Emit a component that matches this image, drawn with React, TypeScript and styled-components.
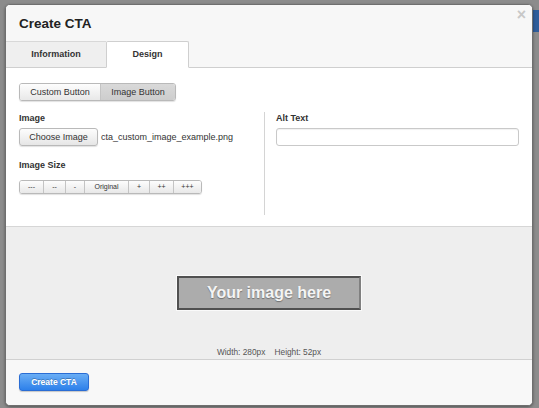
import React from "react";
import styled, { createGlobalStyle, css } from "styled-components";

const GlobalStyle = createGlobalStyle`
  html, body {
    margin: 0;
    padding: 0;
    background: #8c8c8c;
    font-family: "Liberation Sans", Arial, sans-serif;
  }
`;

const Backdrop = styled.div`
  width: 539px;
  height: 408px;
  padding: 4px 6px 4px 5px;
  box-sizing: border-box;
  background: #8c8c8c;
  position: relative;
  overflow: hidden;
`;

const PageHint = styled.div`
  position: absolute;
  right: 0;
  top: 10px;
  width: 8px;
  height: 22px;
  background: #2f5d9a;
`;

const Modal = styled.div`
  position: relative;
  height: 100%;
  display: flex;
  flex-direction: column;
  background: #f8f8f8;
  border: 1px solid #6f6f6f;
  border-radius: 5px;
  overflow: hidden;
  box-shadow: 0 1px 3px rgba(0, 0, 0, 0.4);
`;

const Header = styled.div`
  background: #f7f7f7;
  border-bottom: 1px solid #cfcfcf;
  display: flex;
  flex-direction: column;
`;

const Title = styled.h3`
  margin: 0;
  padding: 10px 13px 9px;
  font-size: 13.5px;
  font-weight: bold;
  color: #222;
  height: 17px;
  line-height: 17px;
`;

const Close = styled.span`
  position: absolute;
  right: 6px;
  top: 2px;
  font-size: 16px;
  font-weight: bold;
  color: #c8c8c8;
  line-height: 16px;
`;

const Tabs = styled.div`
  display: flex;
  margin-bottom: -1px;
`;

const Tab = styled.div<{ $active?: boolean; $w: number }>`
  width: ${(p) => p.$w}px;
  height: 25px;
  line-height: 25px;
  font-size: 9px;
  font-weight: bold;
  text-align: center;
  color: #333;
  ${(p) =>
    p.$active
      ? css`
          background: #fff;
          border: 1px solid #cfcfcf;
          border-bottom: 1px solid #fff;
          border-radius: 2px 2px 0 0;
        `
      : css`
          background: #efefef;
          border-top: 1px solid #d8d8d8;
          border-bottom: 1px solid #cfcfcf;
        `}
`;

const Body = styled.div`
  background: #fff;
  padding: 13px 13px 11px;
`;

const Segmented = styled.div`
  display: inline-flex;
  border: 1px solid #b9b9b9;
  border-radius: 3px;
  overflow: hidden;
  box-shadow: 0 1px 1px rgba(0, 0, 0, 0.12);
`;

const SegButton = styled.div<{ $active?: boolean; $w: number; $h: number; $fs: number }>`
  width: ${(p) => p.$w}px;
  height: ${(p) => p.$h}px;
  line-height: ${(p) => p.$h}px;
  font-size: ${(p) => p.$fs}px;
  text-align: center;
  color: #333;
  background: ${(p) =>
    p.$active
      ? "linear-gradient(#d9d9d9, #cdcdcd)"
      : "linear-gradient(#fdfdfd, #e8e8e8)"};
  & + & {
    border-left: 1px solid #c4c4c4;
  }
`;

const Columns = styled.div`
  display: flex;
  margin-top: 11px;
`;

const LeftCol = styled.div`
  width: 245px;
  border-right: 1px solid #d4d4d4;
  padding-bottom: 21px;
`;

const RightCol = styled.div`
  flex: 1;
  padding-left: 11px;
`;

const Label = styled.div<{ $top?: number }>`
  font-size: 9px;
  font-weight: bold;
  color: #333;
  margin-top: ${(p) => p.$top ?? 0}px;
  margin-bottom: 4px;
  line-height: 12px;
`;

const FileRow = styled.div`
  display: flex;
  align-items: center;
  gap: 3px;
`;

const Button = styled.div`
  width: 77px;
  height: 16px;
  line-height: 16px;
  font-size: 9px;
  text-align: center;
  color: #333;
  border: 1px solid #b9b9b9;
  border-radius: 3px;
  background: linear-gradient(#fdfdfd, #e6e6e6);
  box-shadow: 0 1px 1px rgba(0, 0, 0, 0.12);
`;

const FileName = styled.span`
  font-size: 9px;
  color: #333;
`;

const TextInput = styled.div`
  height: 16px;
  border: 1px solid #c9c9c9;
  border-radius: 3px;
  background: #fff;
  box-shadow: inset 0 1px 1px rgba(0, 0, 0, 0.06);
`;

const Preview = styled.div`
  flex: 1;
  background: #eeeeee;
  border-top: 1px solid #d6d6d6;
  display: flex;
  flex-direction: column;
  align-items: center;
  padding-top: 49px;
`;

const Placeholder = styled.div`
  width: 180px;
  height: 30px;
  background: #acacac;
  border: 2px solid #505050;
  border-right-color: #808080;
  outline: 1px solid #fafafa;
  display: flex;
  align-items: center;
  justify-content: center;
  font-size: 16px;
  font-weight: bold;
  color: #f4f4f4;
  text-shadow: 0 1px 1px rgba(0, 0, 0, 0.35);
`;

const Dimensions = styled.div`
  margin-top: auto;
  margin-bottom: 2px;
  font-size: 8.3px;
  color: #555;
  white-space: pre;
`;

const Footer = styled.div`
  height: 46px;
  background: #f8f8f8;
  border-top: 1px solid #d0d0d0;
  padding: 13px 13px 0;
  box-sizing: border-box;
`;

const PrimaryButton = styled.div`
  width: 68px;
  height: 16px;
  line-height: 16px;
  font-size: 8.5px;
  font-weight: bold;
  text-align: center;
  color: #fff;
  border: 1px solid #2a6dd4;
  border-radius: 3px;
  background: linear-gradient(#6aaef5, #2d80ea);
  text-shadow: 0 -1px 0 rgba(0, 0, 0, 0.25);
  box-shadow: 0 1px 1px rgba(0, 0, 0, 0.2);
`;

const sizes = [
  { t: "---", w: 23 },
  { t: "--", w: 21 },
  { t: "-", w: 18 },
  { t: "Original", w: 43 },
  { t: "+", w: 20 },
  { t: "++", w: 23 },
  { t: "+++", w: 27 },
];

export default function App() {
  return (
    <>
      <GlobalStyle />
      <Backdrop>
        <PageHint />
        <Modal>
          <Close>×</Close>
          <Header>
            <Title>Create CTA</Title>
            <Tabs>
              <Tab $w={100}>Information</Tab>
              <Tab $active $w={81}>
                Design
              </Tab>
            </Tabs>
          </Header>
          <Body>
            <Segmented>
              <SegButton $w={80} $h={16} $fs={9}>
                Custom Button
              </SegButton>
              <SegButton $active $w={74} $h={16} $fs={9}>
                Image Button
              </SegButton>
            </Segmented>
            <Columns>
              <LeftCol>
                <Label $top={0}>Image</Label>
                <FileRow>
                  <Button>Choose Image</Button>
                  <FileName>cta_custom_image_example.png</FileName>
                </FileRow>
                <Label $top={13}>Image Size</Label>
                <Segmented>
                  {sizes.map((s, i) => (
                    <SegButton key={i} $w={s.w} $h={12} $fs={7}>
                      {s.t}
                    </SegButton>
                  ))}
                </Segmented>
              </LeftCol>
              <RightCol>
                <Label $top={0}>Alt Text</Label>
                <TextInput />
              </RightCol>
            </Columns>
          </Body>
          <Preview>
            <Placeholder>Your image here</Placeholder>
            <Dimensions>{"Width: 280px    Height: 52px"}</Dimensions>
          </Preview>
          <Footer>
            <PrimaryButton>Create CTA</PrimaryButton>
          </Footer>
        </Modal>
      </Backdrop>
    </>
  );
}
